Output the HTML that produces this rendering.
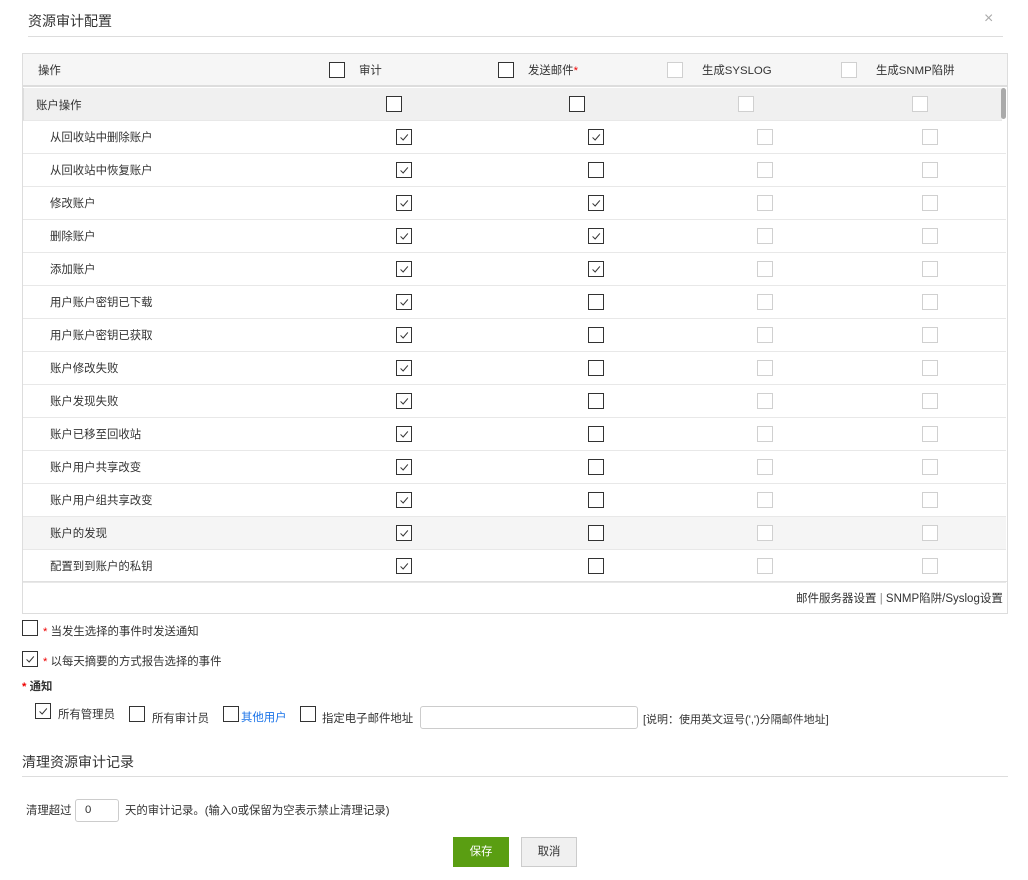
<!DOCTYPE html>
<html><head><meta charset="utf-8"><style>
*{box-sizing:border-box;margin:0;padding:0}
body{width:1028px;height:880px;background:#fff;font-family:"Liberation Sans","Noto Sans CJK SC",sans-serif;font-size:11.4px;color:#333;position:relative;overflow:hidden}
.a{position:absolute;white-space:nowrap}
.cb{position:absolute;width:16px;height:16px;border:1px solid #333;background:#fff}
.cb.d{border-color:#d0d0d0}
.cb svg{position:absolute;left:1px;top:1px}
.row{position:absolute;left:23px;width:983px;height:33px;border-bottom:1px solid #e8e8e8}
.row span.l{position:absolute;left:27px;top:8px}
.req{color:#e00}
</style></head><body>
<div class="a" style="left:28px;top:11px;font-size:14px;color:#333">资源审计配置</div>
<div class="a" style="left:984px;top:10px;font-size:16px;color:#aaa">×</div>
<div class="a" style="left:28px;top:36px;width:975px;height:1px;background:#ddd"></div>

<div class="a" style="left:22px;top:53px;width:986px;height:561px;border:1px solid #ddd"></div>
<div class="a" style="left:23px;top:54px;width:984px;height:33px;background:#f6f6f6;border-bottom:2px solid #ddd"></div>
<div class="a" style="left:38px;top:62px">操作</div>
<span class="cb" style="left:329px;top:62px"></span><div class="a" style="left:359px;top:62px">审计</div>
<span class="cb" style="left:498px;top:62px"></span><div class="a" style="left:528px;top:62px">发送邮件<span class="req">*</span></div>
<span class="cb d" style="left:667px;top:62px"></span><div class="a" style="left:702px;top:62px">生成SYSLOG</div>
<span class="cb d" style="left:841px;top:62px"></span><div class="a" style="left:876px;top:62px">生成SNMP陷阱</div>

<div class="a" style="left:23px;top:88px;width:979px;height:33px;background:#f0f0f0;border-left:1px solid #ddd;border-bottom:1px solid #e8e8e8"></div>
<div class="a" style="left:36px;top:97px">账户操作</div>
<span class="cb" style="left:386px;top:96px"></span>
<span class="cb" style="left:569px;top:96px"></span>
<span class="cb d" style="left:738px;top:96px"></span>
<span class="cb d" style="left:912px;top:96px"></span>
<div class="a" style="left:1001px;top:88px;width:5px;height:31px;background:#aaa;border-radius:3px"></div>

<div class="row" style="top:121px"><span class="l">从回收站中删除账户</span></div>
<div class="row" style="top:154px"><span class="l">从回收站中恢复账户</span></div>
<div class="row" style="top:187px"><span class="l">修改账户</span></div>
<div class="row" style="top:220px"><span class="l">删除账户</span></div>
<div class="row" style="top:253px"><span class="l">添加账户</span></div>
<div class="row" style="top:286px"><span class="l">用户账户密钥已下载</span></div>
<div class="row" style="top:319px"><span class="l">用户账户密钥已获取</span></div>
<div class="row" style="top:352px"><span class="l">账户修改失败</span></div>
<div class="row" style="top:385px"><span class="l">账户发现失败</span></div>
<div class="row" style="top:418px"><span class="l">账户已移至回收站</span></div>
<div class="row" style="top:451px"><span class="l">账户用户共享改变</span></div>
<div class="row" style="top:484px"><span class="l">账户用户组共享改变</span></div>
<div class="row" style="top:517px;background:#f5f5f5"><span class="l">账户的发现</span></div>
<div class="row" style="top:550px"><span class="l">配置到到账户的私钥</span></div>

<svg width="0" height="0" style="position:absolute"><defs><symbol id="ck" viewBox="0 0 14 14"><path d="M3 7.5 L6 10.5 L11.5 4" fill="none" stroke="#333" stroke-width="1.2"/></symbol></defs></svg>
<span class="cb" style="left:396px;top:129px"><svg width="12" height="12"><use href="#ck"/></svg></span><span class="cb" style="left:588px;top:129px"><svg width="12" height="12"><use href="#ck"/></svg></span>
<span class="cb" style="left:396px;top:162px"><svg width="12" height="12"><use href="#ck"/></svg></span><span class="cb" style="left:588px;top:162px"></span>
<span class="cb" style="left:396px;top:195px"><svg width="12" height="12"><use href="#ck"/></svg></span><span class="cb" style="left:588px;top:195px"><svg width="12" height="12"><use href="#ck"/></svg></span>
<span class="cb" style="left:396px;top:228px"><svg width="12" height="12"><use href="#ck"/></svg></span><span class="cb" style="left:588px;top:228px"><svg width="12" height="12"><use href="#ck"/></svg></span>
<span class="cb" style="left:396px;top:261px"><svg width="12" height="12"><use href="#ck"/></svg></span><span class="cb" style="left:588px;top:261px"><svg width="12" height="12"><use href="#ck"/></svg></span>
<span class="cb" style="left:396px;top:294px"><svg width="12" height="12"><use href="#ck"/></svg></span><span class="cb" style="left:588px;top:294px"></span>
<span class="cb" style="left:396px;top:327px"><svg width="12" height="12"><use href="#ck"/></svg></span><span class="cb" style="left:588px;top:327px"></span>
<span class="cb" style="left:396px;top:360px"><svg width="12" height="12"><use href="#ck"/></svg></span><span class="cb" style="left:588px;top:360px"></span>
<span class="cb" style="left:396px;top:393px"><svg width="12" height="12"><use href="#ck"/></svg></span><span class="cb" style="left:588px;top:393px"></span>
<span class="cb" style="left:396px;top:426px"><svg width="12" height="12"><use href="#ck"/></svg></span><span class="cb" style="left:588px;top:426px"></span>
<span class="cb" style="left:396px;top:459px"><svg width="12" height="12"><use href="#ck"/></svg></span><span class="cb" style="left:588px;top:459px"></span>
<span class="cb" style="left:396px;top:492px"><svg width="12" height="12"><use href="#ck"/></svg></span><span class="cb" style="left:588px;top:492px"></span>
<span class="cb" style="left:396px;top:525px"><svg width="12" height="12"><use href="#ck"/></svg></span><span class="cb" style="left:588px;top:525px"></span>
<span class="cb" style="left:396px;top:558px"><svg width="12" height="12"><use href="#ck"/></svg></span><span class="cb" style="left:588px;top:558px"></span>

<span class="cb d" style="left:757px;top:129px"></span><span class="cb d" style="left:922px;top:129px"></span>
<span class="cb d" style="left:757px;top:162px"></span><span class="cb d" style="left:922px;top:162px"></span>
<span class="cb d" style="left:757px;top:195px"></span><span class="cb d" style="left:922px;top:195px"></span>
<span class="cb d" style="left:757px;top:228px"></span><span class="cb d" style="left:922px;top:228px"></span>
<span class="cb d" style="left:757px;top:261px"></span><span class="cb d" style="left:922px;top:261px"></span>
<span class="cb d" style="left:757px;top:294px"></span><span class="cb d" style="left:922px;top:294px"></span>
<span class="cb d" style="left:757px;top:327px"></span><span class="cb d" style="left:922px;top:327px"></span>
<span class="cb d" style="left:757px;top:360px"></span><span class="cb d" style="left:922px;top:360px"></span>
<span class="cb d" style="left:757px;top:393px"></span><span class="cb d" style="left:922px;top:393px"></span>
<span class="cb d" style="left:757px;top:426px"></span><span class="cb d" style="left:922px;top:426px"></span>
<span class="cb d" style="left:757px;top:459px"></span><span class="cb d" style="left:922px;top:459px"></span>
<span class="cb d" style="left:757px;top:492px"></span><span class="cb d" style="left:922px;top:492px"></span>
<span class="cb d" style="left:757px;top:525px"></span><span class="cb d" style="left:922px;top:525px"></span>
<span class="cb d" style="left:757px;top:558px"></span><span class="cb d" style="left:922px;top:558px"></span>

<div class="a" style="left:23px;top:581px;width:984px;height:1px;background:#e0e0e0"></div>
<div class="a" style="left:796px;top:590px;font-size:11.5px">邮件服务器设置 <span style="color:#888">|</span> SNMP陷阱/Syslog设置</div>

<span class="cb" style="left:22px;top:620px"></span>
<div class="a" style="left:43px;top:623px"><span class="req">*</span> 当发生选择的事件时发送通知</div>
<span class="cb" style="left:22px;top:651px"><svg width="12" height="12"><use href="#ck"/></svg></span>
<div class="a" style="left:43px;top:653px"><span class="req">*</span> 以每天摘要的方式报告选择的事件</div>
<div class="a" style="left:22px;top:678px;font-weight:bold"><span class="req">*</span> 通知</div>

<span class="cb" style="left:35px;top:703px"><svg width="12" height="12"><use href="#ck"/></svg></span>
<div class="a" style="left:58px;top:706px">所有管理员</div>
<span class="cb" style="left:129px;top:706px"></span>
<div class="a" style="left:152px;top:710px">所有审计员</div>
<span class="cb" style="left:223px;top:706px"></span>
<div class="a" style="left:241px;top:709px;color:#1a73e8">其他用户</div>
<span class="cb" style="left:300px;top:706px"></span>
<div class="a" style="left:322px;top:710px">指定电子邮件地址</div>
<div class="a" style="left:420px;top:706px;width:218px;height:23px;border:1px solid #ccc;border-radius:3px"></div>
<div class="a" style="left:643px;top:711px;font-size:11px">[说明：使用英文逗号(',')分隔邮件地址]</div>

<div class="a" style="left:22px;top:752px;font-size:14px">清理资源审计记录</div>
<div class="a" style="left:22px;top:776px;width:986px;height:1px;background:#ddd"></div>
<div class="a" style="left:26px;top:802px">清理超过</div>
<div class="a" style="left:75px;top:799px;width:44px;height:23px;border:1px solid #ccc;border-radius:3px;padding:4px 0 0 9px">0</div>
<div class="a" style="left:125px;top:802px">天的审计记录。(输入0或保留为空表示禁止清理记录)</div>

<div class="a" style="left:453px;top:837px;width:56px;height:30px;background:#5a9e12;color:#fff;text-align:center;line-height:30px">保存</div>
<div class="a" style="left:521px;top:837px;width:56px;height:30px;background:#f0f0f0;border:1px solid #ccc;text-align:center;line-height:28px">取消</div>
</body></html>
